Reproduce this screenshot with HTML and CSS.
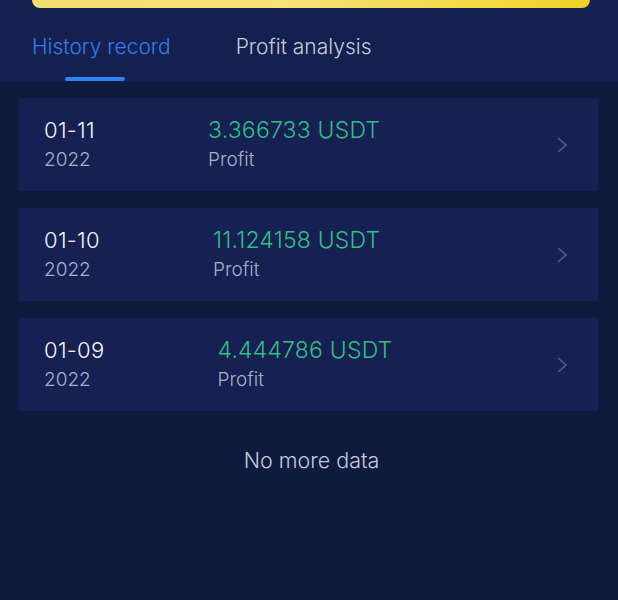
FILE: index.html
```html
<!doctype html>
<html lang="en">
<head>
  <meta charset="utf-8">
  <title>Profit records</title>
  <link rel="stylesheet" href="styles.css">
</head>

<body>
  <div class="header">
    <div class="banner"></div>

    <!-- Tabs -->
    <div class="tabs">
      <div class="tab active">History record</div>
      <div class="tab">Profit analysis</div>
    </div>
  </div>

  <div class="list">
    <div class="card">
      <div class="date">
        <div class="day">01-11</div>
        <div class="year">2022</div>
      </div>
      <div class="amount">
        <div class="value">3.366733 USDT</div>
        <div class="label">Profit</div>
      </div>
      <svg class="chevron" viewBox="0 0 12 18" width="12" height="18">
        <path d="M2 2 L10 9 L2 16" fill="none" stroke="#4e5d8c" stroke-width="1.6"/>
      </svg>
    </div>

    <div class="card">
      <div class="date">
        <div class="day">01-10</div>
        <div class="year">2022</div>
      </div>
      <div class="amount">
        <div class="value">11.124158 USDT</div>
        <div class="label">Profit</div>
      </div>
      <svg class="chevron" viewBox="0 0 12 18" width="12" height="18">
        <path d="M2 2 L10 9 L2 16" fill="none" stroke="#4e5d8c" stroke-width="1.6"/>
      </svg>
    </div>

    <div class="card">
      <div class="date">
        <div class="day">01-09</div>
        <div class="year">2022</div>
      </div>
      <div class="amount">
        <div class="value">4.444786 USDT</div>
        <div class="label">Profit</div>
      </div>
      <svg class="chevron" viewBox="0 0 12 18" width="12" height="18">
        <path d="M2 2 L10 9 L2 16" fill="none" stroke="#4e5d8c" stroke-width="1.6"/>
      </svg>
    </div>

    <p class="end">No more data</p>
  </div>
</body>
</html>
```

FILE: styles.css
```css
* {
  box-sizing: border-box;
}

body {
  font-family: Inter, 'Liberation Sans', sans-serif;
  font-weight: 300;
  background: #0f1a3f;
  margin: 0;
  min-height: 100vh;
}

.header {
  background: #142050;
  height: 81px;
  padding: 0 28px 0 32px;
}

.banner {
  height: 8px;
  border-radius: 0 0 12px 12px;
  background: linear-gradient(90deg, #f3df6e, #f6e27a 45%, #f3d93c 85%, #f0d02a);
}

.tabs {
  display: flex;
  gap: 65px;
  padding-top: 26px;
}

.tab {
  font-size: 21px;
  color: #c7ccd9;
  position: relative;
  height: 48px;
}

.tab.active {
  color: #2f7ff0;
}

.tab.active::after {
  content: '';
  position: absolute;
  left: 33px;
  top: 43px;
  width: 60px;
  height: 4px;
  border-radius: 2px;
  background: #2f83f2;
}

.list {
  padding: 17px 20px 0 19px;
  display: flex;
  flex-direction: column;
  gap: 17px;
}

.card {
  background: #162052;
  height: 93px;
  display: flex;
  align-items: center;
  padding: 0 30px 0 25px;
}

.date {
  margin-right: 113px;
}

.day {
  font-size: 22px;
  color: #f2f4f8;
  line-height: 29px;
  letter-spacing: 0.3px;
}

.year {
  font-size: 19px;
  color: #a9b0c6;
  line-height: 29px;
}

.amount {
  flex: 1;
}

.value {
  font-size: 23px;
  color: #2fbf86;
  line-height: 29px;
  letter-spacing: 0.2px;
}

.label {
  font-size: 19px;
  color: #a9b0c6;
  line-height: 29px;
}

.end {
  text-align: center;
  font-size: 21.5px;
  color: #c4cadb;
  margin: 19px 0 0;
  padding-left: 6px;
}
```
